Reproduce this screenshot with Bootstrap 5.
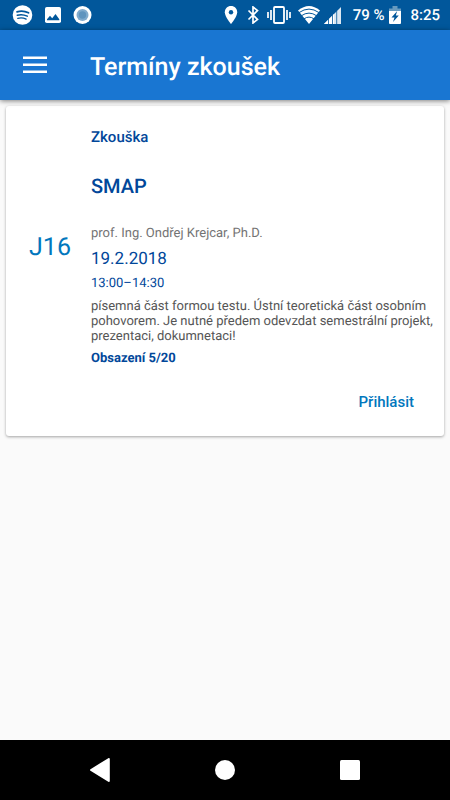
<!DOCTYPE html>
<html lang="cs">
<head>
<meta charset="utf-8">
<meta name="viewport" content="width=device-width, initial-scale=1">
<title>Termíny zkoušek</title>
<link href="https://cdn.jsdelivr.net/npm/bootstrap@5.3.0/dist/css/bootstrap.min.css" rel="stylesheet">
<style>
body { font-family: Roboto, sans-serif; background: #fafafa; text-rendering: geometricPrecision; }
svg { display: block; flex: none; }
.status-bar { height: 30px; background: #01579b; font-size: 15px; line-height: 20px; font-weight: 500; padding: 0 10px 0 12px; }
.status-icons { gap: 7px; }
.app-bar { height: 70px; background: #1976d2; box-shadow: 0 1px 5px rgba(0,0,0,.5); padding: 0 22px; gap: 43px; z-index: 1; }
.app-title { font-size: 25px; line-height: 32px; font-weight: 500; padding-top: 6px; }
.exam-card { border: 0; border-radius: 3px; margin: 6px; box-shadow: 0 1px 3px rgba(0,0,0,.35); padding: 21px 12px 14px 0; }
.room { flex: 0 0 85px; padding-left: 3px; font-size: 25px; line-height: 32px; color: #0277bd; margin-top: 105px; }
.navy { color: #01479a; }
.kind { font-size: 15px; line-height: 20px; font-weight: 500; margin-bottom: 26px; }
.subject { font-size: 20px; line-height: 26px; font-weight: 500; margin-bottom: 27px; }
.teacher { font-size: 13px; line-height: 16px; color: #737373; margin-bottom: 5px; }
.date { font-size: 17px; line-height: 24px; margin-bottom: 5px; }
.time { font-size: 13px; line-height: 16px; margin-bottom: 7px; }
.note { font-size: 13px; line-height: 15px; color: #555; margin: 0 -8px 7px 0; }
.taken { font-size: 13px; line-height: 16px; font-weight: 700; }
.signup { font-size: 15px; line-height: 20px; font-weight: 500; color: #0277bd; padding: 10px 18px; margin-top: 15px; border: 0; }
.nav-keys { height: 60px; background: #000; }
.nav-keys .btn { width: 125px; height: 60px; border: 0; border-radius: 0; }
</style>
<script src="https://cdn.jsdelivr.net/npm/bootstrap@5.3.0/dist/js/bootstrap.bundle.min.js" defer></script>
</head>
<body class="d-flex flex-column min-vh-100">
<div class="status-bar d-flex align-items-center justify-content-between text-white">
  <div class="d-flex align-items-center gap-2">
    <svg width="21" height="20" viewBox="0 0 21 20" fill="none" stroke="#01579b" stroke-linecap="round"><circle cx="10.500" cy="10" r="9.800" fill="#fff" stroke="none"/><path d="M5 6.800q6-1.700 11.500 1" stroke-width="1.800"/><path d="M5.300 10.200q5-1.500 10 1" stroke-width="1.500"/><path d="M5.800 13.300q4.500-1.100 8.300.8" stroke-width="1.300"/></svg>
    <svg class="mx-1" width="16" height="16" viewBox="0 0 16 16"><rect width="16" height="16" rx="1.800" fill="#fff"/><path d="M2 13.300v-1l3-3.500 2.200 2.500 3.300-4.200 3.800 5.200v1z" fill="#01579b"/></svg>
    <svg width="19" height="18" viewBox="0 0 19 18"><circle cx="9.500" cy="9" r="9" fill="#fff"/><circle cx="9.500" cy="9" r="6" fill="#80abcd"/><circle cx="9.500" cy="9" r="3.700" fill="#5f94be"/></svg>
  </div>
  <div class="d-flex align-items-center">
    <div class="status-icons d-flex align-items-center">
      <svg width="14" height="18" viewBox="0 0 14 18"><path d="M7 0C3.400 0 .8 2.700.8 6.200.8 10.700 7 18 7 18s6.200-7.300 6.200-11.800C13.200 2.700 10.600 0 7 0z" fill="#fff"/><circle cx="7" cy="6.200" r="2.200" fill="#01579b"/></svg>
      <svg width="15" height="18" viewBox="-2 0 15 18" fill="none" stroke="#fff" stroke-width="1.700"><path d="M1.500 4.500l9 9L6 17V1l4.500 3.500-9 9"/></svg>
      <svg width="24" height="18" viewBox="0 0 24 18" fill="none" stroke="#fff" stroke-width="1.800"><rect x="7" y="1" width="10" height="16" rx="1"/><path d="M4 4v10M20 4v10M1 6v6M23 6v6" stroke-width="1.700"/></svg>
      <svg width="22" height="18" viewBox="0 0 22 18"><path d="M0 4.500Q11-4.500 22 4.500L11 18z" fill="#fff"/><path d="M1 6.600q10-7 20 0M3.300 9.800q7.700-5.400 15.400 0M5.800 13q5.200-3.800 10.400 0" fill="none" stroke="#01579b" stroke-width="1"/></svg>
    </div>
    <svg class="ms-1" width="17" height="17" viewBox="0 0 17 17"><path d="M0 17L17 0v17z" fill="#dce8f2"/><path d="M0 17l10-10v10z" fill="#fff"/><path d="M4.500 12v5M8.500 8v9M12.700 4v13" stroke="#01579b" stroke-width=".8"/></svg>
    <span class="ms-2 ps-1">79 %</span>
    <svg class="mx-1" width="14" height="18" viewBox="0 0 14 18"><path d="M1 2.500h3.500V0h5v2.500H13V6H1z" fill="#679abf"/><path d="M1 5h12v12q0 1-1 1H2q-1 0-1-1z" fill="#fff"/><path d="M9.200 5L3.500 11.500h3L5 16l5.800-6.500H7.800z" fill="#01579b"/></svg>
    <span class="ms-1">8:25</span>
  </div>
</div>
<header class="app-bar d-flex align-items-center text-white position-relative">
  <button class="btn p-0 border-0 text-white" type="button" aria-label="Menu"><svg width="25" height="18" viewBox="0 0 25 18" fill="#fff"><path d="M1 .500h24v2.500H1zM1 7.500h24V10H1zM1 14.500h24V17H1z"/></svg></button>
  <h1 class="app-title m-0">Termíny zkoušek</h1>
</header>
<main class="flex-grow-1">
  <article class="card exam-card">
    <div class="d-flex">
      <div class="room text-center">J16</div>
      <div class="flex-grow-1">
        <p class="kind navy mt-0">Zkouška</p>
        <h2 class="subject navy mt-0">SMAP</h2>
        <p class="teacher">prof. Ing. Ondřej Krejcar, Ph.D.</p>
        <p class="date navy">19.2.2018</p>
        <p class="time navy">13:00–14:30</p>
        <p class="note">písemná část formou testu. Ústní teoretická část osobním pohovorem. Je nutné předem odevzdat semestrální projekt, prezentaci, dokumnetaci!</p>
        <p class="taken navy m-0">Obsazení 5/20</p>
      </div>
    </div>
    <button class="btn signup align-self-end" type="button">Přihlásit</button>
  </article>
</main>
<nav class="nav-keys d-flex justify-content-center" aria-label="System">
  <button class="btn p-0 d-flex align-items-center justify-content-center" type="button" aria-label="Back"><svg width="20" height="24" viewBox="0 0 20 24"><path d="M18.800 1v22L1 12z" fill="#fff" stroke="#fff" stroke-width="2" stroke-linejoin="round"/></svg></button>
  <button class="btn p-0 d-flex align-items-center justify-content-center" type="button" aria-label="Home"><svg width="20" height="20" viewBox="0 0 20 20"><circle cx="10" cy="10" r="10" fill="#fff"/></svg></button>
  <button class="btn p-0 d-flex align-items-center justify-content-center" type="button" aria-label="Recent"><svg width="20" height="20" viewBox="0 0 20 20"><rect width="20" height="20" rx="1.500" fill="#fff"/></svg></button>
</nav>
</body>
</html>
